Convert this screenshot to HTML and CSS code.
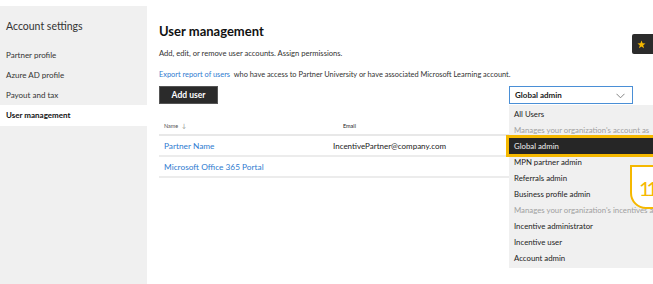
FILE: index.html
```html
<!DOCTYPE html>
<html>
<head>
<meta charset="utf-8">
<link rel="stylesheet" href="styles.css">
</head>
<body>
<div class="page">
  <aside class="sidebar">
    <div class="side-title">Account settings</div>
    <nav class="side-nav">
      <div class="side-item">Partner profile</div>
      <div class="side-item">Azure AD profile</div>
      <div class="side-item">Payout and tax</div>
      <div class="side-item active">User management</div>
    </nav>
  </aside>
  <main class="main">
    <h1 class="title">User management</h1>
    <p class="desc">Add, edit, or remove user accounts. Assign permissions.</p>
    <p class="export"><a class="link">Export report of users</a>&nbsp; who have access to Partner University or have associated Microsoft Learning account.</p>
    <div class="toolbar">
      <button class="btn">Add user</button>
      <div class="select-wrap">
        <div class="select">
          <span>Global admin</span>
          <svg class="chev" width="9" height="6" viewBox="0 0 9 6"><path d="M0.5 0.8 L4.5 4.8 L8.5 0.8" fill="none" stroke="#777" stroke-width="0.9"/></svg>
        </div>
        <ul class="menu">
          <li class="opt">All Users</li>
          <li class="opt grp">Manages your organization's account as</li>
          <li class="opt sel">Global admin</li>
          <li class="opt">MPN partner admin</li>
          <li class="opt">Referrals admin</li>
          <li class="opt">Business profile admin</li>
          <li class="opt grp">Manages your organization's incentives as</li>
          <li class="opt">Incentive administrator</li>
          <li class="opt">Incentive user</li>
          <li class="opt">Account admin</li>
        </ul>
      </div>
    </div>
    <div class="table">
      <div class="thead">
        <div class="c1">Name <span class="arrow">↓</span></div>
        <div class="c2">Email</div>
      </div>
      <div class="trow">
        <div class="c1"><a class="link">Partner Name</a></div>
        <div class="c2 cell-email">IncentivePartner@company.com</div>
      </div>
      <div class="trow">
        <div class="c1"><a class="link">Microsoft Office 365 Portal</a></div>
        <div class="c2"></div>
      </div>
    </div>
  </main>
  <div class="badge">
    <svg width="9" height="9" viewBox="0 0 10 10"><path d="M5 0.5 L6.2 3.6 L9.5 3.8 L6.9 5.9 L7.8 9.2 L5 7.3 L2.2 9.2 L3.1 5.9 L0.5 3.8 L3.8 3.6 Z" fill="#f5b800"/></svg>
  </div>
  <div class="callout">11</div>
</div>
</body>
</html>
```
FILE: styles.css
```css
* { box-sizing: border-box; }
html, body { margin: 0; padding: 0; }
body {
  width: 653px; height: 284px; overflow: hidden; background: #fff;
  font-family: "Lato", "Noto Sans", sans-serif; color: #1a1a1a;
}
.page { position: relative; display: flex; height: 284px; }
.sidebar {
  width: 147px; margin-top: 6px; background: #f0f0f0; flex: none;
}
.side-title { font-size: 10.5px; padding: 14px 0 0 6px; height: 39px; color: #333; }
.side-nav { display: flex; flex-direction: column; }
.side-item { font-size: 8px; height: 20px; line-height: 20px; padding-left: 6px; color: #333; }
.side-item.active { background: #fff; font-weight: 700; color: #111; height: 21px; line-height: 21px; }
.main { flex: 1; padding-left: 12px; padding-right: 14px; }
.title { font-size: 13px; font-weight: 700; margin: 22px 0 0 0; line-height: 18px; color: #111; }
.desc { font-size: 7.6px; margin: 8px 0 0 0; line-height: 11px; color: #333; }
.export { font-size: 7.4px; margin: 10px 0 0 0; line-height: 11px; color: #333; white-space: nowrap; }
.link { color: #2f7bd0; }
.toolbar { display: flex; justify-content: space-between; margin-top: 6px; margin-right: 6px; }
.btn {
  width: 59px; height: 18px; background: #2b2b2b; color: #fff; border: 1px solid #555;
  font-family: inherit; font-size: 8.5px; font-weight: 700; padding: 0;
}
.select-wrap { position: relative; width: 124px; }
.select {
  height: 18px; border: 1.5px solid #4a8fd6; display: flex; align-items: center;
  justify-content: space-between; padding: 0 7px 0 5px; font-size: 8px; font-weight: 700; background: #fff;
}
.chev { margin-top: 1px; }
.menu {
  position: absolute; left: 0; top: 19px; width: 160px; margin: 0; padding: 1px 0 2px 0;
  list-style: none; background: #f0f0f0; z-index: 2;
}
.opt { font-size: 7.8px; height: 16px; line-height: 16px; padding-left: 5px; color: #222; white-space: nowrap; }
.opt.grp { color: #a0a0a0; }
.opt.sel { background: #262626; color: #eee; box-shadow: 0 0 0 3px #f5b800; }
.table { margin-top: 13px; width: 470px; }
.thead { display: flex; height: 19px; font-size: 5.5px; color: #555; align-items: center; border-bottom: 2px solid #e8e8e8; }
.arrow { font-size: 6px; color: #888; margin-left: 2px; }
.trow { display: flex; height: 21px; align-items: center; border-bottom: 2px solid #ececec; font-size: 8.3px; }
.c1 { width: 184px; padding-left: 5px; }
.c2 { flex: 1; color: #222; }
.cell-email { margin-left: -10px; font-size: 8px; }
.badge {
  position: absolute; left: 632px; top: 34px; width: 26px; height: 20px; background: #2b2b2b;
  border-radius: 2px; display: flex; align-items: center; padding-left: 5px;
}
.callout {
  position: absolute; left: 630px; top: 165px; width: 30px; height: 44px; background: #fff;
  border: 2px solid #f5b800; border-radius: 0 0 0 16px; color: #f5b800; font-size: 20px;
  padding: 11px 0 0 7px; line-height: 20px; z-index: 3; letter-spacing: -4px;
}
```
